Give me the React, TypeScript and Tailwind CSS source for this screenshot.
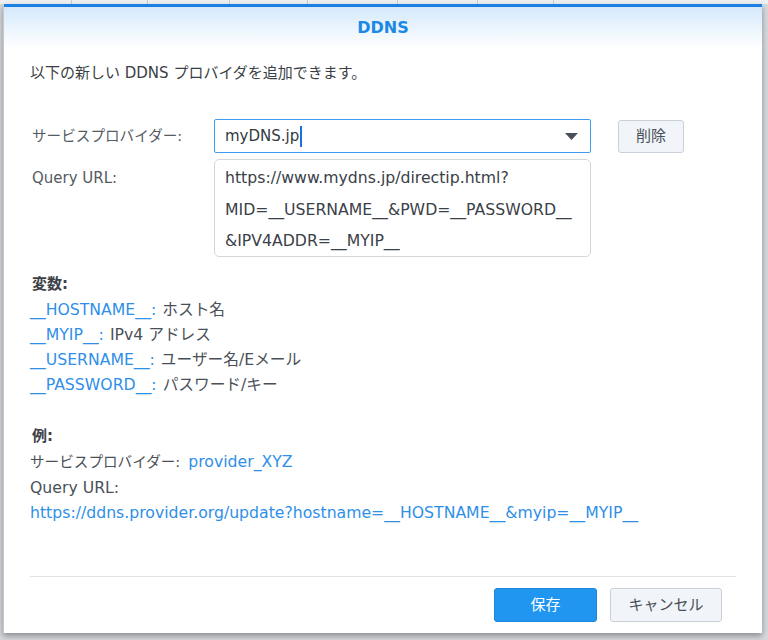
import React from 'react';

const font = { fontFamily: '"DejaVu Sans", "Noto Sans CJK JP", sans-serif' };

const vars = [
  { key: '__HOSTNAME__', desc: 'ホスト名' },
  { key: '__MYIP__', desc: 'IPv4 アドレス' },
  { key: '__USERNAME__', desc: 'ユーザー名/Eメール' },
  { key: '__PASSWORD__', desc: 'パスワード/キー' },
];

export default function App() {
  return (
    <div className="w-[768px] h-[640px] bg-[#d5d8dc] overflow-hidden flex flex-col" style={font}>
      {/* background window tabs */}
      <div className="h-[4px] flex bg-[#eef0f2]">
        {[72, 76, 82, 78, 90, 80, 76].map((w, i) => (
          <div key={i} style={{ width: w }} className="border-r border-[#c9cdd2]" />
        ))}
      </div>

      <div className="ml-[3px] w-[759px] h-[629px] bg-white flex flex-col border-l border-[#c7c9cc] shadow-[0_3px_6px_rgba(0,0,0,0.35)]">
        <div className="h-[3px] bg-[#1b7fe3]" />
        <div className="h-[42px] bg-gradient-to-b from-[#d5e9fb] to-white flex items-center justify-center">
          <span className="text-[16px] font-bold text-[#1c88e6]">DDNS</span>
        </div>

        <div className="flex-1 flex flex-col px-[26px]">
          <p className="mt-[14px] text-[15px] text-[#3a3f45] leading-[20px]">以下の新しい DDNS プロバイダを追加できます。</p>

          <div className="mt-[36px] flex items-center">
            <span className="w-[184px] pl-[2px] text-[14.6px] text-[#555b62]">サービスプロバイダー:</span>
            <div className="w-[377px] h-[34px] border border-[#3d9cf0] rounded-[2px] flex items-center pl-[10px] pr-[12px]">
              <span className="text-[15px] text-[#333a40]">myDNS.jp</span>
              <span className="w-[2px] h-[21px] bg-[#1b6fe0] ml-[1px]" />
              <svg className="ml-auto" width="13" height="7" viewBox="0 0 13 7"><path d="M0 0h13L6.5 7z" fill="#4a5058" /></svg>
            </div>
            <button className="ml-[27px] w-[66px] h-[33px] bg-[#f1f4f9] border border-[#c9d0d9] rounded-[3px] text-[15px] text-[#4a5058]">削除</button>
          </div>

          <div className="mt-[6px] flex items-start">
            <span className="w-[184px] pl-[2px] pt-[8px] text-[15px] text-[#555b62]">Query URL:</span>
            <div className="w-[377px] h-[98px] border border-[#d3d7dc] rounded-[5px] px-[10px] pt-[2px] text-[15.7px] leading-[31.5px] text-[#3a4047]">
              <div>https://www.mydns.jp/directip.html?</div>
              <div>MID=__USERNAME__&amp;PWD=__PASSWORD__</div>
              <div>&amp;IPV4ADDR=__MYIP__</div>
            </div>
          </div>

          <div className="mt-[17px] pl-[2px] text-[15px] font-bold text-[#3d4248] leading-[20px]">変数:</div>
          <div className="flex flex-col text-[15.7px] leading-[25px] mt-[3px]">
            {vars.map(v => (
              <div key={v.key} className="flex">
                <span className="text-[#2f8fe8]">{v.key}:</span>
                <span className="ml-[6px] text-[#4a5058]">{v.desc}</span>
              </div>
            ))}
          </div>

          <div className="mt-[29px] pl-[2px] text-[15px] font-bold text-[#3d4248] leading-[20px]">例:</div>
          <div className="flex flex-col text-[15.7px] leading-[25.5px] mt-[3px]">
            <div className="flex">
              <span className="text-[14.6px] text-[#4a5058]">サービスプロバイダー:</span>
              <span className="ml-[8px] text-[#2f8fe8]">provider_XYZ</span>
            </div>
            <div className="text-[#4a5058]">Query URL:</div>
            <div className="text-[#2f8fe8]">https://ddns.provider.org/update?hostname=__HOSTNAME__&amp;myip=__MYIP__</div>
          </div>

          <div className="mt-auto border-t border-[#e1e3e6] mb-[11px]" />
          <div className="flex justify-end gap-[13px] pr-[14px] mb-[11px]">
            <button className="w-[103px] h-[34px] bg-[#2196f0] border border-[#1c86dc] rounded-[3px] text-[15px] text-white">保存</button>
            <button className="w-[112px] h-[34px] bg-[#f1f4f9] border border-[#c9d0d9] rounded-[3px] text-[15px] text-[#4a5058]">キャンセル</button>
          </div>
        </div>
      </div>
    </div>
  );
}
